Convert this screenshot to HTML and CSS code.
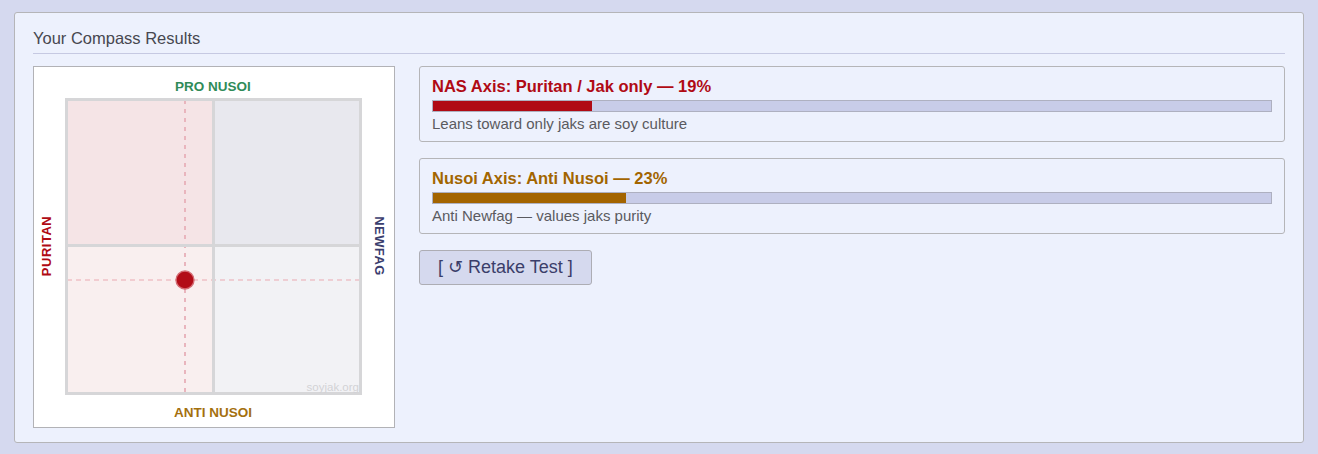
FILE: index.html
```html
<!DOCTYPE html>
<html lang="en">
<head>
<meta charset="utf-8">
<title>Your Compass Results</title>
<link rel="stylesheet" href="styles.css">
</head>
<body>
<section class="panel">
  <h2 class="panel-title">Your Compass Results</h2>
  <div class="results">
    <div class="compass">
      <svg class="compass-svg" width="360" height="360" viewBox="0 0 360 360">
        <rect x="32" y="32" width="147.5" height="147.5" fill="#f5e4e6"/>
        <rect x="179.5" y="32" width="147.5" height="147.5" fill="#e8e8ee"/>
        <rect x="32" y="179.5" width="147.5" height="147.5" fill="#f9efef"/>
        <rect x="179.5" y="179.5" width="147.5" height="147.5" fill="#f2f2f5"/>
        <line x1="151" y1="33" x2="151" y2="326" stroke="#e9b5bd" stroke-width="2" stroke-dasharray="4 5"/>
        <line x1="33" y1="213" x2="326" y2="213" stroke="#eaa9b1" stroke-width="1" stroke-dasharray="5 4"/>
        <line x1="179.5" y1="32" x2="179.5" y2="327" stroke="#d6d6d8" stroke-width="3"/>
        <line x1="32" y1="178.5" x2="327" y2="178.5" stroke="#d6d6d8" stroke-width="3"/>
        <rect x="32.5" y="32.5" width="294" height="294" fill="none" stroke="#d6d6d8" stroke-width="3"/>
        <text x="325" y="324" class="wm" text-anchor="end">soyjak.org</text>
        <circle cx="151" cy="213" r="9" fill="#b20c17" stroke="#d46c74" stroke-width="1.4"/>
        <text x="179" y="24" class="lbl lbl-pro" text-anchor="middle">PRO NUSOI</text>
        <text x="179" y="350" class="lbl lbl-anti" text-anchor="middle">ANTI NUSOI</text>
        <text class="lbl lbl-pur" text-anchor="middle" transform="translate(17 179) rotate(-90)">PURITAN</text>
        <text class="lbl lbl-new" text-anchor="middle" transform="translate(341 179) rotate(90)">NEWFAG</text>
      </svg>
    </div>
    <div class="axes">
      <div class="axis-card">
        <div class="axis-title axis-red">NAS Axis: Puritan / Jak only — 19%</div>
        <div class="bar"><div class="bar-fill fill-red" style="width:19%"></div></div>
        <div class="axis-desc">Leans toward only jaks are soy culture</div>
      </div>
      <div class="axis-card">
        <div class="axis-title axis-gold">Nusoi Axis: Anti Nusoi — 23%</div>
        <div class="bar"><div class="bar-fill fill-gold" style="width:23%"></div></div>
        <div class="axis-desc">Anti Newfag — values jaks purity</div>
      </div>
      <button class="retake" type="button">[ ↺ Retake Test ]</button>
    </div>
  </div>
</section>
</body>
</html>
```

FILE: styles.css
```css
* { box-sizing: border-box; }
html, body { margin: 0; }
body {
  background: #d5d9ef;
  padding: 12px 14px;
  font-family: "Liberation Sans", Arial, sans-serif;
  font-size: 15px;
  color: #444;
}
.panel {
  width: 1290px;
  background: #edf1fd;
  border: 1px solid #b5b5b8;
  border-radius: 3px;
  padding: 16px 18px 14px;
}
.panel-title {
  margin: 0 0 12px;
  font-size: 16.5px;
  font-weight: normal;
  line-height: 18px;
  color: #474750;
  padding-bottom: 6px;
  border-bottom: 1px solid #c6c9e2;
}
.results {
  display: flex;
  align-items: flex-start;
  gap: 24px;
}
.compass {
  flex: 0 0 362px;
  width: 362px;
  height: 362px;
  background: #fff;
  border: 1px solid #b2b2b6;
}
.compass-svg { display: block; }
.lbl {
  font-family: "Liberation Sans", Arial, sans-serif;
  font-weight: bold;
  font-size: 13.5px;
}
.lbl-pro { fill: #2f8b58; }
.lbl-anti { fill: #a4700e; }
.lbl-pur { fill: #b00a14; font-size: 13px; letter-spacing: 0.5px; }
.lbl-new { fill: #3a3d6e; font-size: 13px; letter-spacing: 0.4px; }
.wm {
  font-family: "Liberation Sans", Arial, sans-serif;
  font-size: 11.5px;
  fill: #d2d2d6;
}
.axes {
  flex: 1;
  display: flex;
  flex-direction: column;
  align-items: stretch;
  gap: 16px;
}
.axis-card {
  border: 1px solid #b5b5b8;
  border-radius: 3px;
  padding: 10px 12px 9px;
}
.axis-title {
  font-size: 16.5px;
  font-weight: bold;
  line-height: 18px;
}
.axis-red { color: #b00a14; }
.axis-gold { color: #a26500; }
.bar {
  height: 12px;
  margin: 5px 0 3px;
  background: #c8cce8;
  border: 1px solid #aeb0c0;
}
.bar-fill { height: 100%; }
.fill-red { background: #b00a14; }
.fill-gold { background: #a36400; }
.axis-desc {
  font-size: 15px;
  line-height: 17px;
  color: #5a5a60;
}
.retake {
  align-self: flex-start;
  font-family: "Liberation Sans", "DejaVu Sans", Arial, sans-serif;
  font-size: 18px;
  line-height: 21px;
  padding: 6px 18px;
  color: #3b3e6a;
  background: #d5d9ee;
  border: 1px solid #adadb4;
  border-radius: 3px;
  cursor: pointer;
}
```
